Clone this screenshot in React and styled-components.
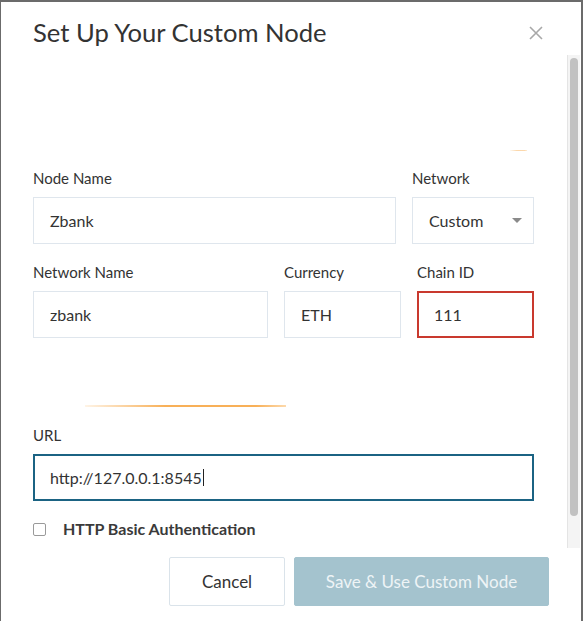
import React from "react";
import styled, { createGlobalStyle } from "styled-components";

const GlobalStyle = createGlobalStyle`
  html, body { margin: 0; padding: 0; height: 100%; }
  body {
    background: #6b6b6b;
    font-family: Lato, "Open Sans", "Liberation Sans", sans-serif;
    color: #333;
    overflow: hidden;
  }
  * { box-sizing: border-box; }
`;

const Overlay = styled.div`
  height: 100vh;
  padding: 2px 2px 0 1px;
`;

const Modal = styled.div`
  background: #fff;
  height: 100%;
  display: flex;
  flex-direction: column;
  overflow: hidden;
`;

const Header = styled.div`
  height: 53px;
  flex: none;
  display: flex;
  justify-content: space-between;
  align-items: flex-start;
  padding: 14px 38px 0 32px;
`;

const Title = styled.h2`
  margin: 0;
  font-size: 25.6px;
  line-height: 32px;
  font-weight: 400;
  color: #333;
`;

const CloseButton = styled.button`
  border: 0;
  background: none;
  padding: 0;
  margin-top: 10px;
  width: 14px;
  height: 14px;
  display: flex;
  cursor: pointer;
`;

const Body = styled.div`
  height: 493px;
  flex: none;
  display: flex;
`;

const Scroller = styled.div`
  flex: 1;
  overflow: hidden;
`;

const Content = styled.div`
  padding: 0 33px 40px 32px;
`;

const Glow = styled.div`
  height: ${(p) => p.$h}px;
  width: ${(p) => p.$w}px;
  margin: ${(p) => p.$m};
  background: linear-gradient(90deg, rgba(250, 180, 90, 0.15), #f8b058 40%, #f8b058 85%, rgba(250, 180, 90, 0.5));
  opacity: ${(p) => p.$o};
`;

const Row = styled.div`
  display: grid;
  grid-template-columns: ${(p) => p.$cols};
  column-gap: ${(p) => p.$gap}px;
  margin-top: ${(p) => p.$mt || 0}px;
`;

const Field = styled.div`
  display: flex;
  flex-direction: column;
  min-width: 0;
`;

const Label = styled.label`
  font-size: 15px;
  line-height: 20px;
  color: #333;
  margin-bottom: 9px;
`;

const Input = styled.div`
  height: 47px;
  display: flex;
  align-items: center;
  font-size: 16px;
  color: #333;
  background: #fff;
  border: ${(p) =>
    p.$state === "error"
      ? "2px solid #c9392e"
      : p.$state === "focus"
      ? "2px solid #1b6383"
      : "1px solid #dfe6ed"};
  padding-left: ${(p) => (p.$state ? 15 : 16)}px;
  padding-right: 12px;
`;

const Caret = styled.span`
  display: inline-block;
  width: 1px;
  height: 17px;
  background: #222;
  margin-left: 1px;
`;

const SelectBox = styled(Input)`
  justify-content: space-between;
  padding-right: 11px;
`;

const CheckRow = styled.label`
  display: flex;
  align-items: center;
  margin-top: 17px;
  height: 20px;
  gap: 17px;
  font-size: 16px;
  font-weight: 700;
  color: #3a3a3a;
`;

const CheckBox = styled.span`
  width: 13px;
  height: 13px;
  border: 1px solid #9a9a9a;
  border-radius: 2px;
  background: #fff;
  margin-top: 2px;
  flex: none;
`;

const ScrollTrack = styled.div`
  width: 13px;
  flex: none;
  margin-right: 1px;
  background: #f4f4f4;
  border-left: 1px solid #e4e4e4;
  padding: 3px 2px 0 2px;
`;

const ScrollThumb = styled.div`
  width: 8px;
  height: 458px;
  border-radius: 4px;
  background: #c1c1c1;
`;

const Footer = styled.div`
  display: flex;
  justify-content: flex-end;
  gap: 9px;
  padding: 9px 32px 0 0;
`;

const Button = styled.button`
  height: 49px;
  width: ${(p) => p.$w}px;
  font-family: inherit;
  font-size: 17px;
  border-radius: 2px;
  cursor: pointer;
  border: ${(p) => (p.$primary ? "1px solid #a4c3ce" : "1px solid #dae3ea")};
  background: ${(p) => (p.$primary ? "#a4c3ce" : "#fff")};
  color: ${(p) => (p.$primary ? "#eef4f6" : "#333")};
`;

export default function App() {
  return (
    <>
      <GlobalStyle />
      <Overlay>
        <Modal>
          <Header>
            <Title>Set Up Your Custom Node</Title>
            <CloseButton aria-label="Close">
              <svg width="14" height="14" viewBox="0 0 14 14">
                <path d="M1 1 L13 13 M13 1 L1 13" stroke="#a8a8a8" strokeWidth="1.6" fill="none" />
              </svg>
            </CloseButton>
          </Header>
          <Body>
            <Scroller>
              <Content>
                <Glow $w={17} $h={1} $m="95px 0 17px 477px" $o={0.5} />
                <Row $cols="363px 1fr" $gap={16}>
                  <Field>
                    <Label>Node Name</Label>
                    <Input>Zbank</Input>
                  </Field>
                  <Field>
                    <Label>Network</Label>
                    <SelectBox>
                      <span>Custom</span>
                      <svg width="10" height="5" viewBox="0 0 10 5">
                        <polygon points="0,0 10,0 5,5" fill="#8a8a8a" />
                      </svg>
                    </SelectBox>
                  </Field>
                </Row>
                <Row $cols="235px 117px 1fr" $gap={16} $mt={18}>
                  <Field>
                    <Label>Network Name</Label>
                    <Input>zbank</Input>
                  </Field>
                  <Field>
                    <Label>Currency</Label>
                    <Input>ETH</Input>
                  </Field>
                  <Field>
                    <Label>Chain ID</Label>
                    <Input $state="error">111</Input>
                  </Field>
                </Row>
                <Glow $w={201} $h={2} $m="67px 0 18px 52px" $o={1} />
                <Field>
                  <Label>URL</Label>
                  <Input $state="focus">
                    http://127.0.0.1:8545
                    <Caret />
                  </Input>
                </Field>
                <CheckRow>
                  <CheckBox />
                  HTTP Basic Authentication
                </CheckRow>
              </Content>
            </Scroller>
            <ScrollTrack>
              <ScrollThumb />
            </ScrollTrack>
          </Body>
          <Footer>
            <Button $w={116}>Cancel</Button>
            <Button $w={255} $primary>
              Save &amp; Use Custom Node
            </Button>
          </Footer>
        </Modal>
      </Overlay>
    </>
  );
}
